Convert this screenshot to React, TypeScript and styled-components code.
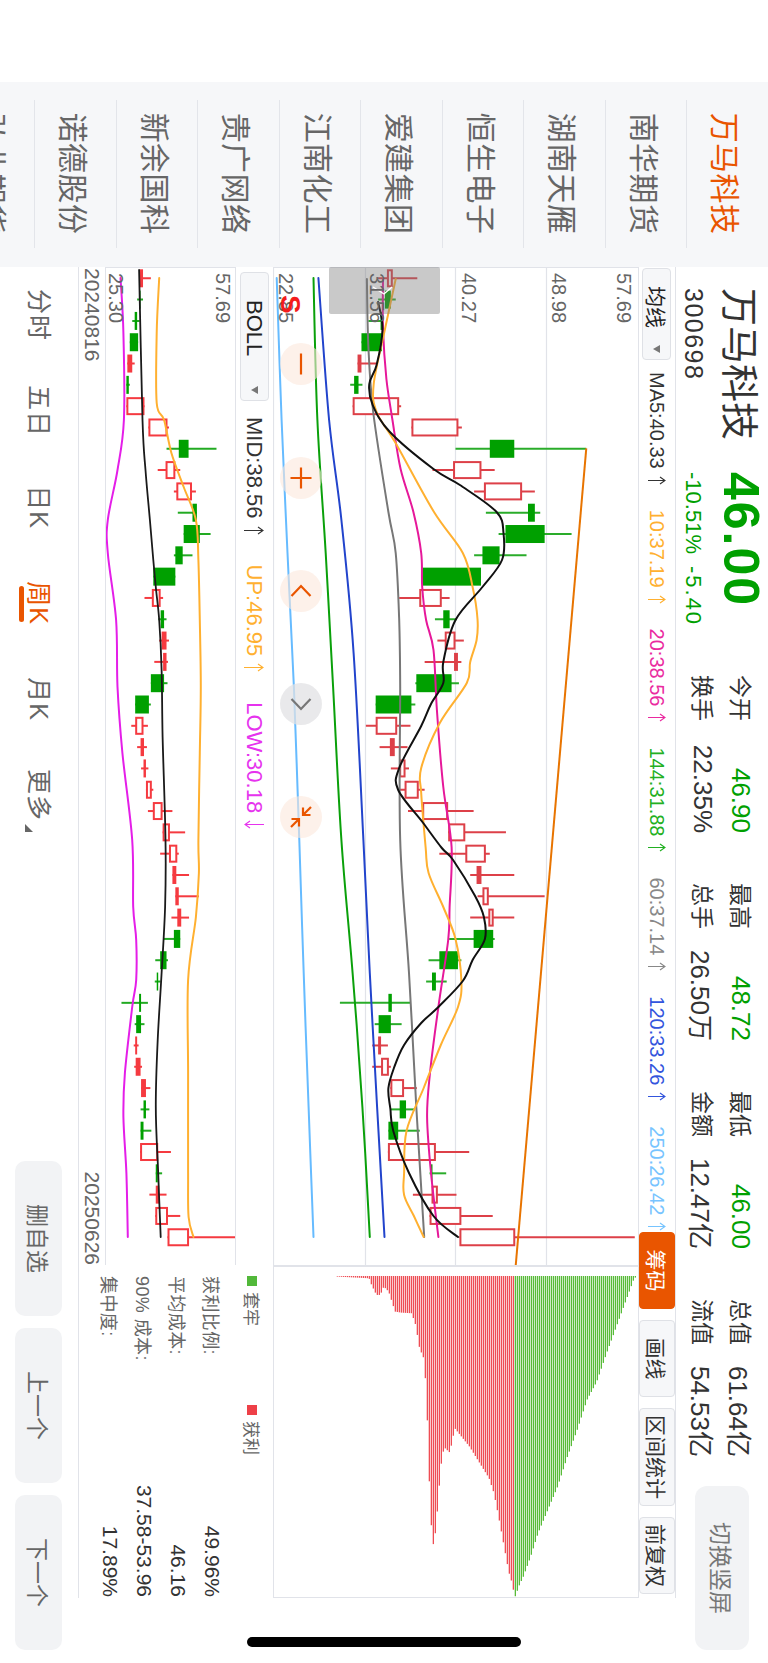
import React from "react";
import styled, { createGlobalStyle } from "styled-components";

const GlobalStyle = createGlobalStyle`
  html, body { margin: 0; padding: 0; width: 768px; height: 1663px; overflow: hidden; background: #fff; }
  body { font-family: "Liberation Sans", "Noto Sans CJK SC", sans-serif; }
  * { box-sizing: border-box; }
`;

const LINE = "#e1e3e9";
const GREEN = "#00a000";
const ORANGE = "#e95500";

const Screen = styled.div`
  position: relative;
  width: 768px;
  height: 1663px;
  overflow: hidden;
  background: #fff;
`;

/* The app is a landscape page turned a quarter clockwise in a portrait window. */
const Stage = styled.div`
  position: absolute;
  left: 768px;
  top: 0;
  width: 1663px;
  height: 768px;
  transform-origin: 0 0;
  transform: rotate(90deg);
  display: flex;
  background: #fff;
`;

const HomeBar = styled.div`
  position: absolute;
  left: 247px;
  top: 1637px;
  width: 274px;
  height: 10px;
  border-radius: 5px;
  background: #000;
`;

const StockList = styled.div`
  flex: 0 0 185px;
  margin-left: 82px;
  height: 768px;
  overflow: hidden;
  background: #f6f7f9;
`;

const StockItem = styled.div<{ $active?: boolean }>`
  position: relative;
  height: 81.5px;
  display: flex;
  align-items: center;
  justify-content: center;
  padding-right: 2px;
  font-size: 30px;
  letter-spacing: 0.4px;
  color: ${(p) => (p.$active ? ORANGE : "#666")};
  &::after {
    content: "";
    position: absolute;
    left: 18px;
    right: 19px;
    bottom: 0;
    height: 1px;
    background: #e3e5ea;
  }
`;

const Main = styled.div`
  flex: 0 0 1331px;
  display: flex;
  flex-direction: column;
  height: 768px;
`;

const Header = styled.div`
  flex: 0 0 93px;
  display: flex;
  align-items: stretch;
  padding-left: 21px;
  border-bottom: 1px solid ${LINE};
`;

const NameBlock = styled.div`
  flex: 0 0 184px;
  display: flex;
  flex-direction: column;
`;

const StockName = styled.div`
  font-size: 38px;
  line-height: 48px;
  margin-top: 5px;
  color: #333;
`;

const StockCode = styled.div`
  font-size: 25px;
  line-height: 30px;
  letter-spacing: 1.5px;
  margin-top: 6px;
  color: #333;
`;

const PriceBlock = styled.div`
  flex: 0 0 203px;
  display: flex;
  flex-direction: column;
`;

const Price = styled.div`
  font-size: 50px;
  line-height: 54px;
  font-weight: 700;
  letter-spacing: 2px;
  color: ${GREEN};
`;

const Change = styled.div`
  display: flex;
  gap: 12px;
  font-size: 22px;
  line-height: 28px;
  margin-top: 7px;
  color: ${GREEN};
`;

const ChangeAmount = styled.span`
  letter-spacing: 2px;
`;

const QuoteGrid = styled.div`
  flex: 0 0 782px;
  display: grid;
  grid-template-columns: repeat(4, 158px);
  grid-auto-rows: 37.5px;
  column-gap: 50px;
  padding-top: 9px;
`;

const QuoteCell = styled.div`
  display: flex;
  align-items: center;
  justify-content: space-between;
`;

const QuoteLabel = styled.span`
  font-size: 23px;
  margin-bottom: 3px;
  color: #333;
`;

const QuoteValue = styled.span<{ $green?: boolean }>`
  font-size: 26px;
  color: ${(p) => (p.$green ? GREEN : "#333")};
`;

const SwitchButton = styled.div`
  flex: 0 0 164px;
  height: 54px;
  margin: 19px -52px 0 auto;
  display: flex;
  align-items: center;
  justify-content: center;
  border-radius: 12px;
  background: #f2f3f5;
  font-size: 23px;
  color: #777;
`;

const IndicatorStrip = styled.div`
  flex: 0 0 36px;
  display: flex;
  align-items: center;
  padding-right: 4px;
`;

const DropButton = styled.div<{ $w: number; $pad: number; $size: number }>`
  flex: 0 0 ${(p) => p.$w}px;
  height: 29px;
  margin-left: 1px;
  display: flex;
  align-items: center;
  justify-content: space-between;
  padding: 0 6px 0 ${(p) => p.$pad}px;
  border: 1px solid #dfe1e6;
  border-radius: 4px;
  background: #f6f7f9;
  font-size: ${(p) => p.$size}px;
  color: #222;
  &::after {
    content: "";
    border-left: 4px solid transparent;
    border-right: 4px solid transparent;
    border-top: 7px solid #777;
  }
`;

const ValueList = styled.div<{ $gap: number; $left: number }>`
  display: flex;
  gap: ${(p) => p.$gap}px;
  margin-left: ${(p) => p.$left}px;
`;

const ValueItem = styled.div<{ $color: string; $size: number }>`
  display: flex;
  align-items: center;
  gap: 7px;
  font-size: ${(p) => p.$size}px;
  line-height: 24px;
  color: ${(p) => p.$color};
`;

const ChipTabs = styled.div`
  display: flex;
  gap: 11px;
  margin-left: auto;
  height: 36px;
`;

const ChipTab = styled.div<{ $active?: boolean }>`
  min-width: 77px;
  padding: 0 6px;
  display: flex;
  align-items: center;
  justify-content: center;
  border: 1px solid ${(p) => (p.$active ? ORANGE : "#dfe1e6")};
  border-radius: 4px;
  font-size: 21px;
  background: ${(p) => (p.$active ? ORANGE : "#f6f7f9")};
  color: ${(p) => (p.$active ? "#fff" : "#333")};
`;

const Content = styled.div`
  flex: 0 0 561px;
  display: flex;
  border-top: 1px solid ${LINE};
  border-bottom: 1px solid ${LINE};
`;

const ChartColumn = styled.div`
  flex: 0 0 998px;
  display: flex;
  flex-direction: column;
`;

const MainChart = styled.div`
  position: relative;
  flex: 0 0 365px;
`;

const ChartSvg = styled.svg`
  display: block;
  width: 100%;
  height: 100%;
  overflow: hidden;
`;

const AxisLabel = styled.span<{ $y: number }>`
  position: absolute;
  left: 6px;
  top: ${(p) => p.$y}px;
  font-size: 20px;
  line-height: 20px;
  color: #666;
`;

const SellMark = styled.span`
  position: absolute;
  left: 28px;
  top: 334px;
  font-size: 28px;
  line-height: 28px;
  font-weight: 700;
  color: #f41c1c;
`;

const ZoomControl = styled.div<{ $x: number; $gray?: boolean }>`
  position: absolute;
  left: ${(p) => p.$x}px;
  top: 316px;
  width: 42px;
  height: 42px;
  border-radius: 50%;
  display: flex;
  align-items: center;
  justify-content: center;
  background: ${(p) => (p.$gray ? "rgba(225,226,228,.75)" : "rgba(252,232,220,.6)")};
  color: ${(p) => (p.$gray ? "#777" : ORANGE)};
`;

const BollStrip = styled.div`
  flex: 0 0 37px;
  display: flex;
  align-items: center;
  padding-left: 4px;
`;

const SubChart = styled.div`
  position: relative;
  flex: 0 0 131px;
  border-top: 1px solid ${LINE};
  border-bottom: 1px solid ${LINE};
`;

const DateRow = styled.div`
  flex: 1;
  display: flex;
  align-items: center;
  justify-content: space-between;
  padding-left: 1px;
  font-size: 21px;
  color: #666;
`;

const SidePanel = styled.div`
  flex: 0 0 333px;
  display: flex;
  flex-direction: column;
`;

const ChipChart = styled.div`
  flex: 0 0 365px;
  border-left: 2px solid ${LINE};
  border-right: 1px solid ${LINE};
  border-bottom: 1px solid ${LINE};
`;

const Legend = styled.div`
  display: flex;
  height: 21px;
  margin: 10px 0 13px 11px;
`;

const LegendItem = styled.div<{ $color: string }>`
  flex: 0 0 129px;
  display: flex;
  align-items: center;
  gap: 6px;
  font-size: 17px;
  color: #666;
  &::before {
    content: "";
    width: 10px;
    height: 10px;
    background: ${(p) => p.$color};
  }
`;

const ChipRow = styled.div`
  height: 34px;
  display: flex;
  align-items: center;
  justify-content: space-between;
  padding: 0 1px 0 11px;
`;

const ChipLabel = styled.span`
  font-size: 18px;
  letter-spacing: 0.4px;
  color: #666;
`;

const ChipValue = styled.span`
  font-size: 21px;
  color: #333;
`;

const BottomBar = styled.div`
  flex: 1;
  display: flex;
  align-items: center;
`;

const NavItem = styled.div<{ $active?: boolean }>`
  position: relative;
  flex: 0 0 96px;
  height: 78px;
  display: flex;
  align-items: center;
  justify-content: center;
  padding-bottom: 4px;
  font-size: 25px;
  letter-spacing: 1px;
  color: ${(p) => (p.$active ? ORANGE : "#666")};
  ${(p) =>
    p.$active
      ? `&::after {
    content: "";
    position: absolute;
    left: 31px;
    width: 36px;
    bottom: 19px;
    height: 5px;
    border-radius: 3px;
    background: ${ORANGE};
  }`
      : ""}
`;

const MoreCorner = styled.svg`
  position: absolute;
  left: 77px;
  top: 45px;
  width: 8px;
  height: 8px;
`;

const ActionGroup = styled.div`
  display: flex;
  gap: 12px;
  margin: 0 -52px 0 auto;
`;

const ActionButton = styled.div`
  width: 155px;
  height: 47px;
  display: flex;
  align-items: center;
  justify-content: center;
  border-radius: 10px;
  background: #f2f3f5;
  font-size: 23px;
  color: #666;
`;

/* ---------- chart data, read off the picture ---------- */
const SCALE = 2.0417; // page x of a reading = value / SCALE
const toLy = (v: number) => 768 - v / SCALE;
const candleX = (i: number) => 278.3 + 21.31 * i - 267;

type Candle = ["r" | "g", number, number, number, number];

const mainCandles: Candle[] = [
  ["r", 790, 802, 772, 852], ["g", 786, 798, 772, 808], ["g", 777, 781, 752, 782], ["g", 738, 780, 738, 780],
  ["r", 730, 738, 730, 768], ["g", 723, 732, 715, 740], ["r", 720, 815, 720, 819], ["r", 840, 936, 840, 943],
  ["g", 1000, 1050, 930, 1197], ["r", 925, 983, 883, 1010], ["r", 988, 1066, 968, 1092], ["g", 1078, 1092, 992, 1103],
  ["g", 1032, 1112, 1018, 1167], ["g", 985, 1020, 968, 1075], ["g", 862, 982, 862, 982], ["r", 856, 902, 815, 918],
  ["g", 905, 918, 888, 933], ["r", 908, 930, 893, 947], ["r", 927, 935, 867, 942], ["g", 850, 922, 848, 937],
  ["g", 767, 840, 767, 848], ["r", 767, 811, 747, 838], ["r", 796, 806, 775, 832], ["r", 815, 828, 798, 835],
  ["r", 826, 855, 815, 867], ["r", 862, 915, 833, 967], ["r", 915, 950, 915, 1033], ["r", 950, 992, 897, 1000],
  ["r", 973, 983, 960, 1050], ["r", 985, 998, 975, 1112], ["r", 997, 1008, 960, 1050], ["g", 967, 1007, 917, 1010],
  ["g", 897, 935, 875, 942], ["g", 882, 890, 870, 912], ["g", 793, 800, 694, 838], ["g", 773, 798, 765, 820],
  ["r", 772, 778, 760, 792], ["r", 778, 794, 760, 798], ["r", 797, 825, 797, 851], ["g", 816, 829, 798, 847],
  ["g", 793, 813, 793, 857], ["r", 792, 890, 792, 958], ["g", 880, 883, 877, 911], ["r", 881, 894, 843, 932],
  ["r", 877, 942, 877, 1006], ["r", 938, 1052, 938, 1296],
];

const subCandles: Candle[] = [
  ["r", 285, 292, 285, 308], ["g", 284, 287, 280, 292], ["g", 275, 280, 270, 285], ["g", 265, 282, 265, 282],
  ["r", 260, 270, 260, 275], ["g", 258, 263, 258, 265], ["r", 258, 295, 258, 295], ["r", 303, 342, 303, 345],
  ["g", 365, 385, 340, 442], ["r", 338, 358, 322, 368], ["r", 360, 392, 355, 400], ["g", 393, 402, 363, 402],
  ["g", 375, 408, 375, 430], ["g", 358, 373, 355, 393], ["g", 313, 358, 313, 358], ["r", 310, 328, 295, 333],
  ["g", 328, 335, 323, 340], ["r", 330, 340, 325, 345], ["r", 333, 340, 315, 343], ["g", 308, 335, 308, 342],
  ["g", 276, 304, 276, 308], ["r", 276, 293, 268, 302], ["r", 287, 294, 280, 300], ["r", 293, 298, 288, 303],
  ["r", 298, 310, 298, 313], ["r", 312, 332, 302, 352], ["r", 332, 347, 332, 378], ["r", 345, 362, 327, 365],
  ["r", 352, 360, 352, 386], ["r", 358, 365, 358, 406], ["r", 362, 370, 350, 386], ["g", 355, 368, 333, 368],
  ["g", 327, 340, 317, 343], ["g", 320, 323, 316, 328], ["g", 284, 288, 248, 302], ["g", 278, 288, 275, 295],
  ["r", 276, 280, 273, 283], ["r", 277, 287, 274, 290], ["r", 288, 298, 288, 307], ["g", 293, 298, 287, 305],
  ["g", 287, 293, 287, 309], ["r", 286, 323, 286, 349], ["g", 318, 322, 318, 331], ["r", 318, 325, 305, 340],
  ["r", 317, 343, 317, 368], ["r", 342, 386, 342, 480],
];

type Series = { color: string; width: number; pts: number[] };

const mainSeries: Series[] = [
  { color: "#66bbff", width: 2, pts: [278, 565, 420, 575, 553, 587, 687, 600, 840, 611, 973, 620, 1107, 630, 1237, 640] },
  { color: "#0aa00a", width: 2, pts: [278, 640, 420, 648, 553, 665, 687, 680, 840, 697, 973, 720, 1107, 740, 1237, 755] },
  { color: "#2244cc", width: 2, pts: [278, 650, 420, 672, 520, 697, 653, 722, 840, 742, 973, 755, 1107, 770, 1237, 785] },
  { color: "#777", width: 2, pts: [279, 749, 345, 752, 412, 762, 512, 793, 553, 808, 620, 815, 687, 817, 840, 817, 973, 835, 1107, 850, 1237, 866] },
  { color: "#e6189a", width: 2, pts: [279, 782, 329, 782, 379, 789, 419, 801, 469, 818, 512, 844, 553, 860, 587, 862, 620, 870, 650, 885, 710, 892, 787, 905, 847, 922, 907, 918, 940, 915, 1007, 895, 1073, 878, 1117, 872, 1173, 880, 1237, 895] },
  { color: "#ffb030", width: 2, pts: [279, 808, 329, 786, 384, 763, 412, 769, 445, 810, 512, 886, 553, 945, 587, 965, 619, 975, 640, 973, 662, 960, 683, 953, 723, 898, 768, 860, 793, 860, 847, 869, 873, 875, 907, 905, 939, 930, 981, 942, 1007, 935, 1045, 900, 1088, 865, 1131, 830, 1173, 825, 1195, 825, 1216, 845, 1237, 865] },
  { color: "#111", width: 2, pts: [302, 772, 329, 781, 365, 769, 384, 754, 405, 761, 432, 796, 469, 885, 485, 939, 512, 1014, 533, 1028, 560, 1025, 587, 985, 620, 930, 662, 905, 683, 905, 704, 880, 726, 860, 768, 815, 790, 813, 823, 864, 848, 902, 860, 925, 896, 970, 917, 988, 939, 990, 960, 965, 981, 945, 1007, 895, 1023, 860, 1045, 825, 1067, 805, 1088, 793, 1109, 797, 1131, 803, 1173, 835, 1216, 885, 1237, 935] },
];

const subSeries: Series[] = [
  { color: "#e41ee8", width: 2, pts: [278, 246, 333, 252, 420, 253, 470, 240, 520, 220, 553, 220, 620, 237, 687, 240, 753, 250, 840, 270, 907, 272, 940, 278, 980, 278, 1007, 270, 1073, 255, 1117, 252, 1173, 258, 1237, 261] },
  { color: "#ffb030", width: 2, pts: [278, 325, 333, 320, 403, 320, 420, 335, 453, 350, 487, 375, 520, 400, 560, 405, 620, 408, 687, 410, 753, 408, 840, 405, 873, 406, 917, 400, 980, 384, 1073, 384, 1173, 384, 1217, 385, 1237, 395] },
  { color: "#1a1a1a", width: 1.8, pts: [270, 284, 420, 291, 470, 297, 520, 306, 560, 313, 587, 318, 620, 325, 670, 330, 737, 332, 840, 338, 907, 337, 973, 330, 1040, 322, 1107, 318, 1173, 323, 1237, 328] },
];

const chipEnvelope: number[] = [
  690, 100, 755, 105, 760, 125, 770, 155, 778, 155, 785, 130, 795, 145, 808, 205, 820, 208, 842, 210, 850, 245,
  858, 315, 868, 350, 875, 567, 880, 818, 887, 915, 893, 830, 897, 750, 902, 665, 908, 612, 920, 628, 930, 555,
  960, 610, 1000, 705, 1010, 750, 1020, 825, 1030, 905, 1040, 985, 1048, 1025, 1052, 1065, 1062, 1025, 1070, 1000,
  1085, 940, 1100, 870, 1120, 800, 1140, 730, 1160, 640, 1180, 560, 1200, 470, 1220, 415, 1240, 330, 1260, 250,
  1280, 170, 1295, 110, 1300, 100,
];

const chipLength = (zx: number) => {
  for (let i = 0; i < chipEnvelope.length - 2; i += 2) {
    const x0 = chipEnvelope[i];
    const x1 = chipEnvelope[i + 2];
    if (zx >= x0 && zx <= x1) {
      const t = (zx - x0) / (x1 - x0);
      const y = chipEnvelope[i + 1] + t * (chipEnvelope[i + 3] - chipEnvelope[i + 1]);
      return (y - 100) / 3 + 0.6;
    }
  }
  return 0;
};

const chipBars = Array.from({ length: 150 }, (_, i) => {
  const pageX = 338 + i * 2;
  const zx = pageX * SCALE;
  return { y: 768 - pageX - 130, len: chipLength(zx), red: zx < 1052 };
});

/* ---------- drawing parts ---------- */
const Candles: React.FC<{ data: Candle[]; top: number; red: string; wickRed: string; wickGreen: string }> = ({
  data,
  top,
  red,
  wickRed,
  wickGreen,
}) => (
  <g>
    {data.map(([kind, lo, hi, wLo, wHi], i) => {
      const cx = candleX(i);
      const y0 = toLy(hi) - top;
      const y1 = toLy(lo) - top;
      const wick = kind === "r" ? wickRed : wickGreen;
      const solid = kind === "g" || y1 - y0 < 5;
      return (
        <g key={i}>
          <line x1={cx} x2={cx} y1={toLy(wHi) - top} y2={toLy(wLo) - top} stroke={wick} strokeWidth={2} />
          {solid ? (
            <rect x={cx - 9} y={y0} width={18} height={y1 - y0} fill={kind === "g" ? GREEN : red} />
          ) : (
            <rect x={cx - 8} y={y0 + 1} width={16} height={y1 - y0 - 2} fill="#fff" stroke={red} strokeWidth={2} />
          )}
        </g>
      );
    })}
  </g>
);

/* Smooth line through the readings (Catmull-Rom handles turned into cubic curves). */
const smoothPath = (s: Series, top: number) => {
  const p: [number, number][] = [];
  for (let k = 0; k < s.pts.length; k += 2) p.push([s.pts[k] - 267, toLy(s.pts[k + 1]) - top]);
  let d = `M${p[0][0]} ${p[0][1].toFixed(1)}`;
  for (let i = 0; i < p.length - 1; i++) {
    const a = p[Math.max(i - 1, 0)];
    const b = p[i];
    const c = p[i + 1];
    const e = p[Math.min(i + 2, p.length - 1)];
    const c1x = b[0] + (c[0] - a[0]) / 6;
    const c1y = b[1] + (c[1] - a[1]) / 6;
    const c2x = c[0] - (e[0] - b[0]) / 6;
    const c2y = c[1] - (e[1] - b[1]) / 6;
    d += `C${c1x.toFixed(1)} ${c1y.toFixed(1)} ${c2x.toFixed(1)} ${c2y.toFixed(1)} ${c[0]} ${c[1].toFixed(1)}`;
  }
  return d;
};

const Lines: React.FC<{ data: Series[]; top: number }> = ({ data, top }) => (
  <g fill="none" strokeLinejoin="round" strokeLinecap="round">
    {data.map((s, i) => (
      <path key={i} d={smoothPath(s, top)} stroke={s.color} strokeWidth={s.width} />
    ))}
  </g>
);

const Arrow: React.FC<{ down?: boolean; h?: number }> = ({ down, h = 18 }) => (
  <svg width="9" height={h} viewBox={`0 0 9 ${h}`} fill="none" stroke="currentColor" strokeWidth="1.1">
    {down ? (
      <path d={`M4.5 0V${h - 1}M1 ${h - 6}L4.5 ${h - 1}L8 ${h - 6}`} />
    ) : (
      <path d={`M4.5 ${h}V1M1 6L4.5 1L8 6`} />
    )}
  </svg>
);

const Glyph: React.FC<{ d: string }> = ({ d }) => (
  <svg width="26" height="26" viewBox="0 0 26 26" fill="none" stroke="currentColor" strokeWidth="2.2">
    <path d={d} />
  </svg>
);

const stocks = ["万马科技", "南华期货", "湖南天雁", "恒生电子", "爱建集团", "江南化工", "贵广网络", "新余国科", "诺德股份", "弘业期货"];
const maValues = [
  { t: "MA5:40.33", c: "#333" },
  { t: "10:37.19", c: "#ffb030" },
  { t: "20:38.56", c: "#ea2aa0" },
  { t: "144:31.88", c: "#22b022" },
  { t: "60:37.14", c: "#888" },
  { t: "120:33.26", c: "#3355dd" },
  { t: "250:26.42", c: "#77c4ff" },
];
const quotes = [
  ["今开", "46.90", true],
  ["最高", "48.72", true],
  ["最低", "46.00", true],
  ["总值", "61.64亿", false],
  ["换手", "22.35%", false],
  ["总手", "26.50万", false],
  ["金额", "12.47亿", false],
  ["流值", "54.53亿", false],
] as const;
const controls = [
  { x: 76, d: "M2.5 13H23.5" },
  { x: 190, d: "M2.5 13H23.5M13 2.5V23.5" },
  { x: 303, d: "M18 3.5L8 13L18 22.5" },
  { x: 416, d: "M8 3.5L18 13L8 22.5", gray: true },
  { x: 529, d: "M3 3L11 11M11 3.5V11H3.5M23 23L15 15M15 22.5V15H22.5" },
];

export default function App() {
  return (
    <Screen>
      <GlobalStyle />
      <Stage>
        <StockList>
          {stocks.map((s, i) => (
            <StockItem key={s} $active={i === 0}>
              {s}
            </StockItem>
          ))}
        </StockList>

        <Main>
          <Header>
            <NameBlock>
              <StockName>万马科技</StockName>
              <StockCode>300698</StockCode>
            </NameBlock>
            <PriceBlock>
              <Price>46.00</Price>
              <Change>
                <span>-10.51%</span>
                <ChangeAmount>-5.40</ChangeAmount>
              </Change>
            </PriceBlock>
            <QuoteGrid>
              {quotes.map(([label, value, green]) => (
                <QuoteCell key={label}>
                  <QuoteLabel>{label}</QuoteLabel>
                  <QuoteValue $green={green}>{value}</QuoteValue>
                </QuoteCell>
              ))}
            </QuoteGrid>
            <SwitchButton>切换竖屏</SwitchButton>
          </Header>

          <IndicatorStrip>
            <DropButton $w={92} $pad={17} $size={21}>
              均线
            </DropButton>
            <ValueList $gap={25} $left={12}>
              {maValues.map((m) => (
                <ValueItem key={m.t} $color={m.c} $size={20}>
                  {m.t}
                  <Arrow />
                </ValueItem>
              ))}
            </ValueList>
            <ChipTabs>
              <ChipTab $active>筹码</ChipTab>
              <ChipTab>画线</ChipTab>
              <ChipTab>区间统计</ChipTab>
              <ChipTab>前复权</ChipTab>
            </ChipTabs>
          </IndicatorStrip>

          <Content>
            <ChartColumn>
              <MainChart>
                <ChartSvg viewBox="0 0 998 365">
                  <g stroke={LINE} strokeWidth="1.2">
                    <line x1="0" x2="998" y1="91.5" y2="91.5" />
                    <line x1="0" x2="998" y1="182.5" y2="182.5" />
                    <line x1="0" x2="998" y1="272.5" y2="272.5" />
                    <line x1="0" x2="998" y1="364.5" y2="364.5" />
                    <line x1="0.5" x2="0.5" y1="0" y2="365" />
                  </g>
                  <Candles data={mainCandles} top={130} red="#dd4048" wickRed="#dd4048" wickGreen="#2aac2a" />
                  <line x1={448.3 - 267} y1={toLy(1197) - 130} x2={1265 - 267} y2={toLy(1053) - 130} stroke="#e87400" strokeWidth="2" />
                  <Lines data={mainSeries} top={130} />
                  <rect x="0" y="198" width="47" height="111" rx="2" fill="rgba(120,120,120,.4)" />
                  <polyline points="20,246 27,254 20,265" fill="none" stroke="#fff" strokeWidth="1.4" />
                </ChartSvg>
                <AxisLabel $y={4}>57.69</AxisLabel>
                <AxisLabel $y={69}>48.98</AxisLabel>
                <AxisLabel $y={159}>40.27</AxisLabel>
                <AxisLabel $y={251}>31.56</AxisLabel>
                <AxisLabel $y={342}>22.85</AxisLabel>
                <SellMark>S</SellMark>
                {controls.map((c) => (
                  <ZoomControl key={c.x} $x={c.x} $gray={c.gray}>
                    <Glyph d={c.d} />
                  </ZoomControl>
                ))}
              </MainChart>

              <BollStrip>
                <DropButton $w={129} $pad={27} $size={22}>
                  BOLL
                </DropButton>
                <ValueList $gap={30} $left={16}>
                  <ValueItem $color="#333" $size={22}>
                    MID:38.56
                    <Arrow h={20} />
                  </ValueItem>
                  <ValueItem $color="#ffb030" $size={22}>
                    UP:46.95
                    <Arrow h={20} />
                  </ValueItem>
                  <ValueItem $color="#e633ee" $size={22}>
                    LOW:30.18
                    <Arrow down h={20} />
                  </ValueItem>
                </ValueList>
              </BollStrip>

              <SubChart>
                <ChartSvg viewBox="0 0 998 129">
                  <line x1="0.5" x2="0.5" y1="0" y2="129" stroke={LINE} strokeWidth="1.2" />
                  <Candles data={subCandles} top={533} red="#f53a40" wickRed="#f53a40" wickGreen="#22aa22" />
                  <Lines data={subSeries} top={533} />
                </ChartSvg>
                <AxisLabel $y={2}>57.69</AxisLabel>
                <AxisLabel $y={109}>25.30</AxisLabel>
              </SubChart>

              <DateRow>
                <span>20240816</span>
                <span>20250626</span>
              </DateRow>
            </ChartColumn>

            <SidePanel>
              <ChipChart>
                <ChartSvg viewBox="0 0 330 364" preserveAspectRatio="none">
                  {chipBars.map((b, i) => (
                    <rect key={i} x="9" y={b.y} width={b.len} height="1.3" fill={b.red ? "#ee4d54" : "#58bb38"} />
                  ))}
                </ChartSvg>
              </ChipChart>
              <Legend>
                <LegendItem $color="#52b83a">套牢</LegendItem>
                <LegendItem $color="#ee4048">获利</LegendItem>
              </Legend>
              <ChipRow>
                <ChipLabel>获利比例:</ChipLabel>
                <ChipValue>49.96%</ChipValue>
              </ChipRow>
              <ChipRow>
                <ChipLabel>平均成本:</ChipLabel>
                <ChipValue>46.16</ChipValue>
              </ChipRow>
              <ChipRow>
                <ChipLabel>90% 成本:</ChipLabel>
                <ChipValue>37.58-53.96</ChipValue>
              </ChipRow>
              <ChipRow>
                <ChipLabel>集中度:</ChipLabel>
                <ChipValue>17.89%</ChipValue>
              </ChipRow>
            </SidePanel>
          </Content>

          <BottomBar>
            <NavItem>分时</NavItem>
            <NavItem>五日</NavItem>
            <NavItem>日K</NavItem>
            <NavItem $active>周K</NavItem>
            <NavItem>月K</NavItem>
            <NavItem>
              更多
              <MoreCorner viewBox="0 0 8 8">
                <path d="M8 0V8H0Z" fill="#666" />
              </MoreCorner>
            </NavItem>
            <ActionGroup>
              <ActionButton>删自选</ActionButton>
              <ActionButton>上一个</ActionButton>
              <ActionButton>下一个</ActionButton>
            </ActionGroup>
          </BottomBar>
        </Main>
      </Stage>
      <HomeBar />
    </Screen>
  );
}
